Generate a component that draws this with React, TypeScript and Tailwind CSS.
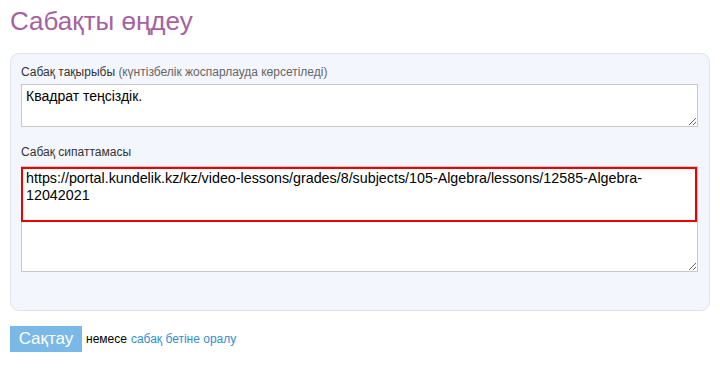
export default function App() {
  return (
    <div className="w-[720px] h-[371px] bg-white px-[10px] pt-[4px] font-['Liberation_Sans',Arial,sans-serif]">
      <h1 className="text-[26px] leading-[35px] text-[#a662a0]">Сабақты өңдеу</h1>

      {/* Lesson form panel */}
      <div className="mt-[14px] w-[700px] h-[258px] rounded-[9px] border border-[#dfe3ea] bg-[#f3f6fd] px-[10px] pt-[10px]">
        <label className="block text-[12px] leading-[16px] text-[#333]">
          Сабақ тақырыбы <span className="text-[#666]">(күнтізбелік жоспарлауда көрсетіледі)</span>
        </label>
        <textarea
          className="mt-[4px] block w-[677px] h-[43px] border border-[#c8c8c8] bg-white px-[4px] py-[3px] text-[14px] leading-[17px] text-black outline-none"
          defaultValue="Квадрат теңсіздік."
        />

        <label className="block mt-[17px] text-[12px] leading-[16px] text-[#333]">Сабақ сипаттамасы</label>
        <div className="relative mt-[6px]">
          <textarea
            className="block w-[677px] h-[106px] border border-[#c8c8c8] bg-white px-[4px] py-[3px] text-[14.3px] leading-[17px] text-black outline-none"
            defaultValue="https://portal.kundelik.kz/kz/video-lessons/grades/8/subjects/105-Algebra/lessons/12585-Algebra-12042021"
          />
          <div className="absolute left-0 top-[1px] w-[676px] h-[55px] border-2 border-[#ee0000] pointer-events-none" />
        </div>
      </div>

      <div className="mt-[15px] flex items-center gap-[4px]">
        <button className="w-[72px] h-[26px] bg-[#7ab8e8] text-white text-[17px] leading-[26px]">Сақтау</button>
        <span className="text-[12px] text-black">немесе</span>
        <a href="#" className="text-[12px] text-[#2f8fd0]">сабақ бетіне оралу</a>
      </div>
    </div>
  );
}
